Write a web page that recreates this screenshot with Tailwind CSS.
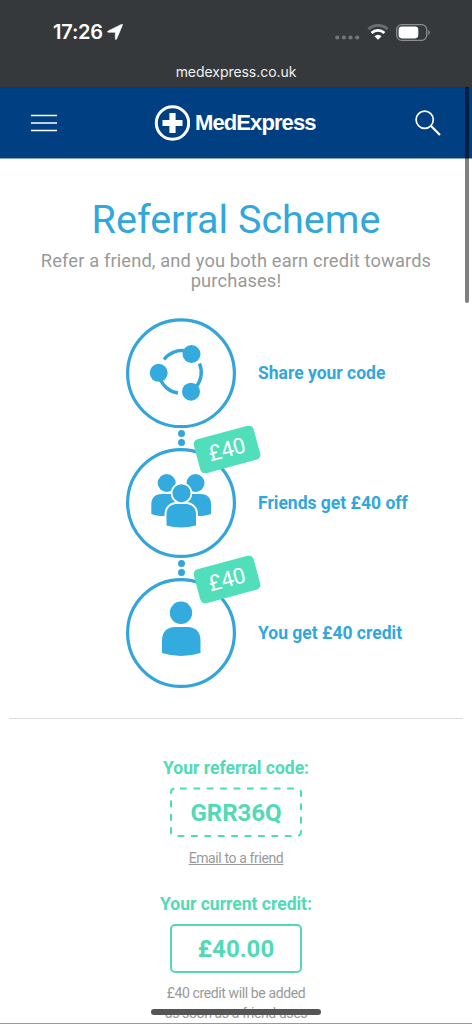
<!DOCTYPE html>
<html lang="en">
<head>
    <meta charset="UTF-8">
    <meta name="viewport" content="width=device-width,initial-scale=1">
    <title>MedExpress - Referral Scheme</title>
    <script src="https://cdn.jsdelivr.net/npm/@tailwindcss/browser@4"></script>
</head>
<body class="bg-white font-[Roboto,sans-serif]">
<div class="relative w-[472px] h-[1024px] overflow-hidden">
    <!-- status bar -->
    <div class="h-[87px] bg-[#36393b] text-white font-[Inter,sans-serif]">
        <div class="flex items-center h-[62px] pt-[2px] pl-[53px] pr-[41px]">
            <span class="w-[50px] text-[20px] font-semibold tracking-[-0.2px]">17:26</span>
            <svg class="ml-[4px]" width="16" height="16" viewBox="0 0 16 16" fill="#fff" stroke="#fff" stroke-width=".6"><path d="M15.400 1.200 9.600 15c-.4.900-1.300.700-1.300-.3V8.300H1.500c-1.100 0-1.300-1-.3-1.400L14.400.4c.9-.4 1.400 0 1 .8z"/></svg>
            <svg class="ml-auto mt-[11px]" width="25" height="5" viewBox="0 0 25 5" fill="#737577"><circle cx="2.3" cy="2.5" r="2.1"/><circle cx="8.9" cy="2.5" r="2.1"/><circle cx="15.5" cy="2.5" r="2.1"/><circle cx="22.2" cy="2.5" r="2.1"/></svg>
            <svg class="ml-[7px]" width="22" height="16" viewBox="0 0 22 16" fill="none" stroke-width="2.8"><path d="M1.400 5.300a13.600 13.600 0 0 1 19.200 0" stroke="#6b6d6f"/><path d="M4.600 9a9 9 0 0 1 12.800 0" stroke="#fff"/><path d="m11 15.800-3.600-3.600a5 5 0 0 1 7.200 0z" fill="#fff"/></svg>
            <svg class="ml-[7px]" width="35" height="17" viewBox="0 0 35 17"><rect x=".7" y=".7" width="30" height="15.6" rx="5" fill="none" stroke="#8b8d8e" stroke-width="1.3"/><rect x="2.6" y="2.6" width="19.7" height="11.8" rx="3.3" fill="#fff"/><path d="M32.3 6v5c2-.7 2-4.3 0-5z" fill="#8b8d8e"/></svg>
        </div>
        <div class="text-center text-[14px] leading-[20px] tracking-[-0.05px] text-[#f0f0f0]">medexpress.co.uk</div>
    </div>

    <!-- header -->
    <header class="flex items-center h-[72px] pl-[31px] pr-[31px] bg-[#003f82] border-b border-[#7f9fc0] text-white">
        <svg width="26" height="18" viewBox="0 0 26 18" stroke="#fff" stroke-width="1.700"><path d="M0 1.500h26M0 9h26M0 16.500h26"/></svg>
        <svg class="ml-[97px]" width="36" height="36" viewBox="0 0 36 36"><circle cx="18.500" cy="18" r="16.200" fill="none" stroke="#fff" stroke-width="3"/><path d="M15.400 8h6.200v6.900h6.900v6.200h-6.900V28h-6.200v-6.900H8.500v-6.200h6.900z" fill="#fff"/></svg>
        <span class="ml-[5px] text-[22px] font-bold font-['Liberation_Sans',sans-serif] tracking-[-0.9px] whitespace-nowrap">MedExpress</span>
        <svg class="ml-auto" width="26" height="26" viewBox="0 0 26 26" fill="none" stroke="#fff" stroke-width="1.7"><circle cx="9.7" cy="9.7" r="8.6"/><path d="M15.800 15.800 25 25" stroke-width="2.200"/></svg>
    </header>

    <main>
        <h1 class="pt-[37px] text-center text-[39.5px] leading-[48px] text-[#31a7dc]">Referral Scheme</h1>
        <p class="mt-[7px] text-center text-[18.3px] leading-[20px] tracking-[0.14px] text-[#999]">Refer a friend, and you both earn credit towards<br>purchases!</p>

        <!-- steps -->
        <section class="mt-[27px] pl-[126px] text-[17.5px] font-bold text-[#31a7dc]">
            <div class="flex items-center gap-[22px] h-[110px]">
                <svg width="110" height="110" viewBox="0 0 110 110" fill="#33abdf"><circle cx="55" cy="55.300" r="53.400" fill="none" stroke="#34a5da" stroke-width="3.200"/>
                    <g fill="none" stroke="#34a5da" stroke-width="3.4"><path d="M38 41.500A22 22 0 0 1 60 33"/><path d="M73.500 45.500A23 23 0 0 1 70 69"/><path d="M34 60A22 22 0 0 0 52 75"/></g>
                    <circle cx="65.5" cy="36" r="9"/><circle cx="32.7" cy="54.8" r="9"/><circle cx="65" cy="73.7" r="9"/></svg>
                <span>Share your code</span>
            </div>
            <div class="flex flex-col items-center justify-center gap-[2px] w-[110px] h-[20px]">
                <div class="size-[7px] rounded-full bg-[#33a5da]"></div>
                <div class="size-[7px] rounded-full bg-[#33a5da]"></div>
            </div>
            <div class="relative flex items-center gap-[22px] h-[110px]">
                <svg width="110" height="110" viewBox="0 0 110 110" fill="#33abdf"><circle cx="55" cy="55" r="53.4" fill="none" stroke="#34a5da" stroke-width="3.2"/>
                    <circle cx="40.7" cy="35" r="9"/><circle cx="69.5" cy="35" r="9"/>
                    <path d="M25.300 66V56c0-6 4-10 10-10h11c6 0 9 4 9 10v12H34q-5-.5-8.700-2z"/><path d="M85 66V56c0-6-4-10-10-10H64c-6 0-9 4-9 10v12h21q5-.5 9-2z"/>
                    <path d="M40.500 77.500V66.500c0-6.500 4-10.500 10.500-10.500h8.500c6.500 0 10.500 4 10.500 10.500v11q-15 4-29.500 0z" stroke="#fff" stroke-width="4" paint-order="stroke"/>
                    <circle cx="55.500" cy="45.200" r="9" stroke="#fff" stroke-width="3.500" paint-order="stroke"/></svg>
                <span>Friends get £40 off</span>
                <div class="absolute left-[70px] top-[-16px] flex items-center justify-center w-[62px] h-[35px] rounded-[5px] bg-[#50dfba] text-white text-[22px] font-normal -rotate-[15deg]">£40</div>
            </div>
            <div class="flex flex-col items-center justify-center gap-[2px] w-[110px] h-[20px]">
                <div class="size-[7px] rounded-full bg-[#33a5da]"></div>
                <div class="size-[7px] rounded-full bg-[#33a5da]"></div>
            </div>
            <div class="relative flex items-center gap-[22px] h-[110px]">
                <svg width="110" height="110" viewBox="0 0 110 110" fill="#33abdf"><circle cx="55" cy="55" r="53.4" fill="none" stroke="#34a5da" stroke-width="3.2"/>
                    <circle cx="55" cy="34.800" r="11.200"/><path d="M36 75V62.500C36 54 41 49 49 49h12.500c8 0 13 5 13 13.500V75q-19.500 6-38.500 0z"/></svg>
                <span>You get £40 credit</span>
                <div class="absolute left-[70px] top-[-16px] flex items-center justify-center w-[62px] h-[35px] rounded-[5px] bg-[#50dfba] text-white text-[22px] font-normal -rotate-[15deg]">£40</div>
            </div>
        </section>

        <hr class="mt-[30px] mx-[9px] border-[#ddd]">

        <!-- code and credit -->
        <section class="flex flex-col items-center text-center text-[#50dab5]">
            <h2 class="mt-[37px] text-[17.5px] leading-[24px] font-bold">Your referral code:</h2>
            <div class="relative mt-[7px] flex items-center justify-center w-[132px] h-[50px] pt-px text-[24px] font-bold">
                <svg class="absolute inset-0" width="132" height="50" viewBox="0 0 132 50" fill="none" stroke="#50dab5" stroke-width="2"><rect x="1" y="1.500" width="130" height="47.500" rx="4" stroke-dasharray="6.700 6.700" stroke-dashoffset="-5"/></svg>
                GRR36Q
            </div>
            <a class="mt-[11px] text-[14px] leading-[20px] tracking-[-0.38px] text-[#999] underline">Email to a friend</a>
            <h2 class="mt-[24px] text-[17.5px] leading-[24px] font-bold">Your current credit:</h2>
            <div class="mt-[8px] flex items-center justify-center w-[132px] h-[49px] border-2 border-[#50dab5] rounded-[5px] text-[24px] font-bold">£40.00</div>
            <p class="mt-[11px] text-[14px] leading-[19.500px] tracking-[-0.38px] text-[#999]">£40 credit will be added<br>as soon as a friend uses</p>
        </section>
    </main>

    <!-- scrollbar, home indicator, bottom edge -->
    <div class="absolute right-[3px] top-[87px] w-[4px] h-[216px] rounded-b-full bg-black/50"></div>
    <div class="absolute left-[151px] top-[1009px] w-[170px] h-[6px] rounded-full bg-[#555]"></div>
    <div class="absolute left-0 bottom-0 w-full h-px bg-[#999]"></div>
</div>
</body>
</html>
